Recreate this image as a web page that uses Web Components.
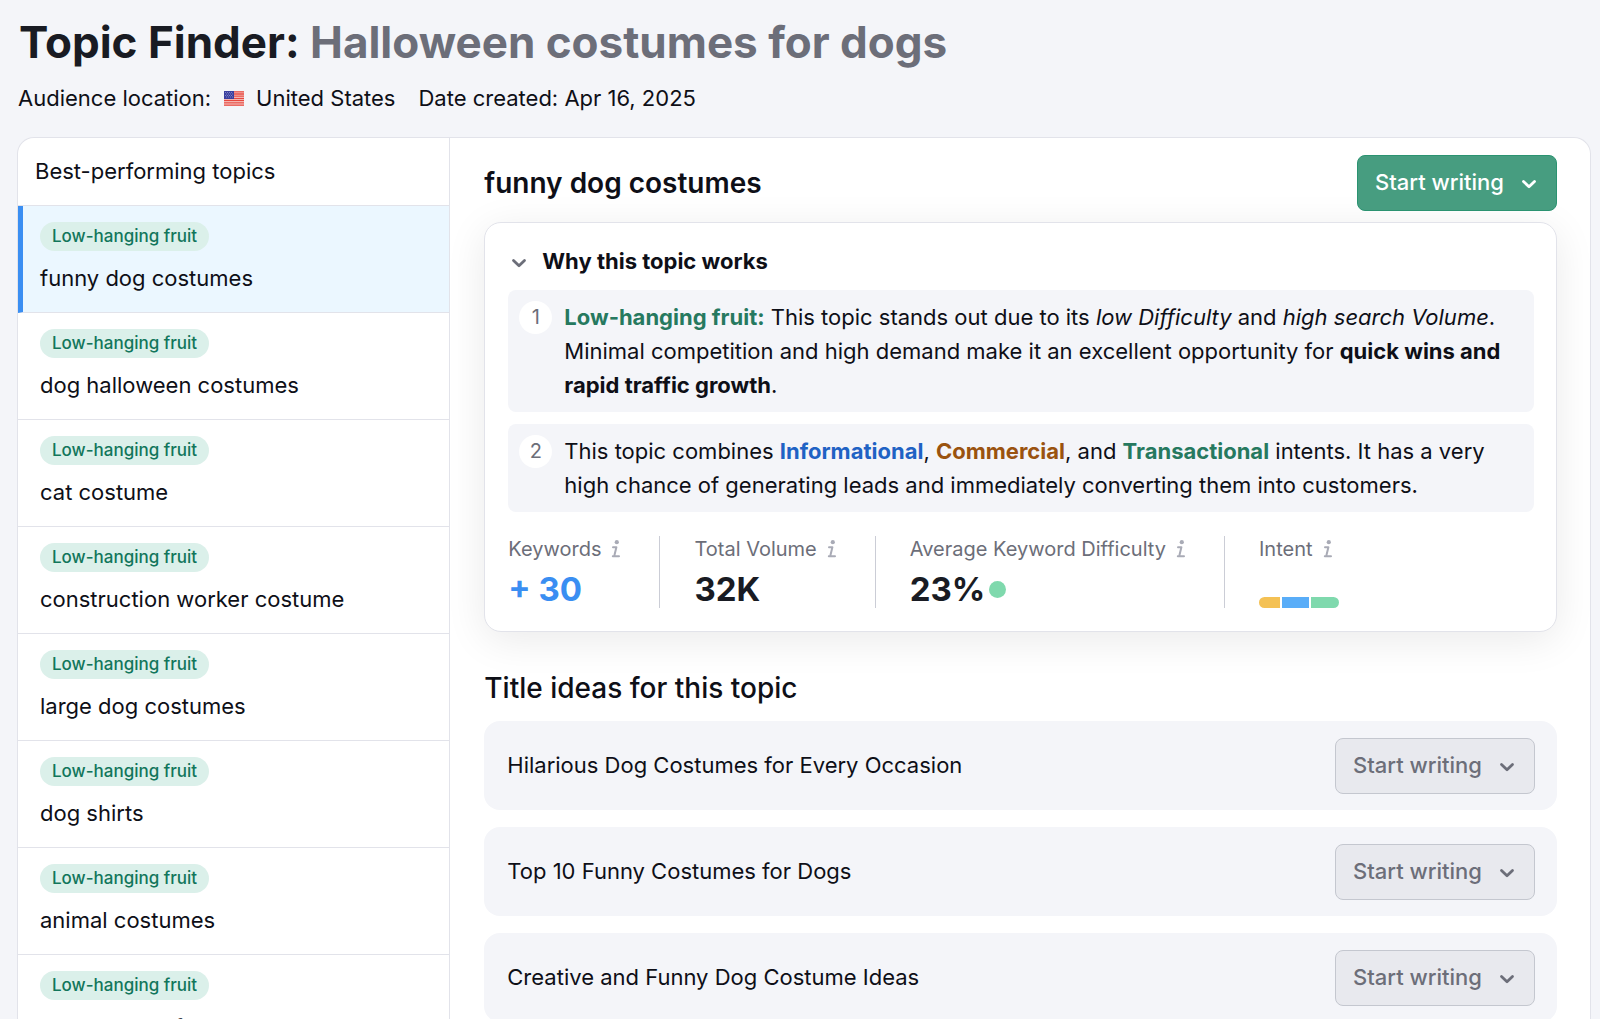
<!DOCTYPE html>
<html lang="en">
<head>
<meta charset="utf-8">
<meta name="viewport" content="width=device-width, initial-scale=1">
<title>Topic Finder</title>
<style>
  html, body { margin: 0; height: 100%; }
  body {
    --ink: #191b23;
    --muted: #6c6e79;
    --page: #f4f5f9;
    --line: #e2e3ea;
    font: 22px/34px Inter, "Liberation Sans", sans-serif;
    color: #0e0f17;
    background: var(--page);
    overflow: hidden;
  }
</style>
</head>
<body>
<topic-finder></topic-finder>

<script>
const define = (name, html, init) => {
  const template = document.createElement('template');
  template.innerHTML = '<style>*{box-sizing:border-box}</style>' + html;
  customElements.define(name, class extends HTMLElement {
    connectedCallback() {
      if (this.shadowRoot) return;
      this.attachShadow({ mode: 'open' }).append(template.content.cloneNode(true));
      if (init) init(this, this.shadowRoot);
    }
  });
};

define('chevron-icon', `
  <style>:host{display:block;width:22px;height:22px} svg{display:block}</style>
  <svg width="22" height="22" viewBox="0 0 22 22" fill="none" stroke="currentColor" stroke-width="2.800" stroke-linecap="round" stroke-linejoin="round" aria-hidden="true"><path d="M5.500 9.500 11 14.800l5.500-5.300"/></svg>`);

define('info-icon', `
  <style>:host{display:block;width:10px;height:18px;color:#a9abb6} svg{display:block}</style>
  <svg width="10" height="18" viewBox="0 0 10 18" fill="none" stroke="currentColor" stroke-width="2" stroke-linecap="round" stroke-linejoin="round" aria-hidden="true"><circle cx="5.800" cy="2.200" r="2.100" fill="currentColor" stroke="none"/><path d="M2 7.200h3.400L3.600 14.500q-.4 1.700 1.200 1.700H8M1.800 16.200h2"/></svg>`);

define('us-flag', `
  <style>:host{display:block;width:20px;height:15px} svg{display:block}</style>
  <svg width="20" height="15" viewBox="0 0 20 15" role="img" aria-label="US flag">
    <rect width="20" height="15" fill="#f7d9d6"/>
    <path d="M0 .8h20M0 3h20M0 5.200h20M0 7.500h20M0 9.700h20M0 11.900h20M0 14.200h20" stroke="#e8473f" stroke-width="1.300"/>
    <rect width="10" height="8" fill="#3a3f9f"/>
    <path d="M1 1.500h8M2 3h8M1 4.500h8M2 6h8" stroke="#8d90cc" stroke-width=".8" stroke-dasharray="1 1"/>
  </svg>`);

define('write-button', `
  <style>
    :host{display:block;flex:none}
    button{display:flex;align-items:center;gap:14px;height:56px;padding:0 16px 2px 17px;border:1px solid #c4c7cf;border-radius:8px;background:#e8e9ee;color:var(--muted);font:500 22px/34px Inter,"Liberation Sans",sans-serif;cursor:pointer}
    :host([primary]) button{background:#479d80;border-color:#2b9371;color:#fff}
    chevron-icon{margin-top:2px}
  </style>
  <button type="button"><span>Start writing</span><chevron-icon></chevron-icon></button>`);

define('topic-item', `
  <style>
    :host{display:block}
    a{display:block;height:107px;padding:16px 17px 0 22px;border-bottom:1px solid var(--line);color:inherit;text-decoration:none}
    :host([selected]) a{background:#ebf7ff;border-left:5px solid #3a8ef2;padding-left:17px}
    .badge{display:block;width:fit-content;padding:0 12px;border-radius:15px;background:#dbf0ea;color:#12765b;font-size:17px;font-weight:500;line-height:29px}
    .name{display:block;margin-top:10px}
  </style>
  <a href="#"><span class="badge">Low-hanging fruit</span><span class="name"><slot></slot></span></a>`);

define('insight-note', `
  <style>
    :host{display:flex;align-items:flex-start;gap:12px;padding:11px 12px 11px 11px;border-radius:8px;background:var(--page)}
    .num{flex:none;width:33px;height:33px;border-radius:50%;background:#fff;color:var(--muted);font-size:20px;line-height:33px;text-align:center}
    .text{line-height:34px;margin:-1px 0}
  </style>
  <span class="num"></span><div class="text"><slot></slot></div>`,
  (host, root) => { root.querySelector('.num').textContent = host.getAttribute('number'); });

define('stat-block', `
  <style>
    :host{display:flex;flex-direction:column;justify-content:space-between;height:72px;padding:0 38px 0 34px;border-left:1px solid #cbcdd6}
    :host([first]){padding-left:0;border-left:0}
    :host([last]) .value{align-items:flex-end}
    .label{display:flex;align-items:center;gap:10px;color:var(--muted);font-size:20px;line-height:26px}
    .value{display:flex;align-items:center;gap:4px;height:38px;font-size:33px;font-weight:700;line-height:38px;color:var(--ink)}
  </style>
  <div class="label"><span></span><info-icon></info-icon></div><div class="value"><slot></slot></div>`,
  (host, root) => { root.querySelector('.label span').textContent = host.getAttribute('label'); });

define('intent-bar', `
  <style>
    :host{display:flex;gap:2px;width:80px;height:11px;border-radius:6px;overflow:hidden}
    i:nth-of-type(1){flex:21;background:#f4c154} i:nth-of-type(2){flex:27;background:#59adf8} i:nth-of-type(3){flex:28;background:#7fd9ad}
  </style><i></i><i></i><i></i>`);

define('title-idea', `
  <style>
    :host{display:flex;align-items:center;justify-content:space-between;height:89px;padding:0 22px 0 23px;border-radius:16px;background:var(--page)}
    .title{padding-bottom:2px}
  </style>
  <span class="title"><slot></slot></span><write-button></write-button>`);

define('why-panel', `
  <style>
    :host{display:flex;flex-direction:column;gap:12px;padding:21px 22px 23px 23px;border:1px solid var(--line);border-radius:17px;background:#fff;box-shadow:0 8px 40px rgba(0,0,0,.085)}
    h3{display:flex;margin:0;font-size:22px;line-height:34px}
    h3 button{display:flex;align-items:center;gap:12px;padding:0;border:0;background:none;color:inherit;font:700 22px/34px Inter,"Liberation Sans",sans-serif}
    chevron-icon{color:var(--muted);margin-top:2px}
    .stats{display:flex;margin-top:12px}
    em{font-style:italic} b{font-weight:700}
    .green{color:#26795f} .blue{color:#1f62c4} .brown{color:#9a5310}
    .plus{color:#3a8ef2}
    .dot{width:17px;height:17px;border-radius:50%;background:#7fd9ad}
  </style>
  <h3><button type="button" aria-expanded="true"><chevron-icon></chevron-icon><span>Why this topic works</span></button></h3>
  <insight-note number="1"><b class="green">Low-hanging fruit:</b> This topic stands out due to its <em>low Difficulty</em> and <em>high search Volume</em>. Minimal competition and high demand make it an excellent opportunity for <b>quick wins and rapid traffic growth</b>.</insight-note>
  <insight-note number="2">This topic combines <b class="blue">Informational</b>, <b class="brown">Commercial</b>, and <b class="green">Transactional</b> intents. It has a very high chance of generating leads and immediately converting them into customers.</insight-note>
  <div class="stats">
    <stat-block first label="Keywords"><span class="plus">+ 30</span></stat-block>
    <stat-block label="Total Volume">32K</stat-block>
    <stat-block label="Average Keyword Difficulty">23%<span class="dot"></span></stat-block>
    <stat-block last label="Intent"><intent-bar></intent-bar></stat-block>
  </div>`);

define('topic-finder', `
  <style>
    :host{display:flex;flex-direction:column;height:100vh;padding:17px 9px 0 17px}
    h1{margin:0;padding-left:2px;font-size:44px;font-weight:700;line-height:50px;color:var(--ink)}
    h1 span{color:var(--muted)}
    .meta{display:flex;align-items:center;margin-top:14px;padding-left:1px}
    .meta us-flag{margin:0 12px 0 13px}
    .meta .date{margin-left:23px}
    .card{display:flex;flex:1;min-height:0;margin-top:22px;border:1px solid var(--line);border-bottom:0;border-radius:17px 17px 0 0;background:#fff;overflow:hidden}
    nav{flex:none;width:27.500%;border-right:1px solid var(--line)}
    nav h2{margin:0;padding:16px 17px 17px;border-bottom:1px solid var(--line);font-size:22px;font-weight:400;line-height:34px}
    main{flex:1;min-width:0;padding:17px 33px 0 34px}
    .head{display:flex;align-items:center;justify-content:space-between;margin-bottom:11px}
    .head h2{margin:0;font-size:28px;font-weight:600;line-height:38px}
    .ideas{margin:37px 0 14px;font-size:28px;font-weight:500;line-height:38px}
    .list{display:flex;flex-direction:column;gap:17px}
  </style>
  <header>
    <h1>Topic Finder: <span>Halloween costumes for dogs</span></h1>
    <div class="meta"><span>Audience location:</span><us-flag></us-flag><span>United States</span><span class="date">Date created: Apr 16, 2025</span></div>
  </header>
  <div class="card">
    <nav>
      <h2>Best-performing topics</h2>
      <topic-item selected>funny dog costumes</topic-item>
      <topic-item>dog halloween costumes</topic-item>
      <topic-item>cat costume</topic-item>
      <topic-item>construction worker costume</topic-item>
      <topic-item>large dog costumes</topic-item>
      <topic-item>dog shirts</topic-item>
      <topic-item>animal costumes</topic-item>
      <topic-item>cat costume for</topic-item>
    </nav>
    <main>
      <div class="head"><h2>funny dog costumes</h2><write-button primary></write-button></div>
      <why-panel></why-panel>
      <h2 class="ideas">Title ideas for this topic</h2>
      <div class="list">
        <title-idea>Hilarious Dog Costumes for Every Occasion</title-idea>
        <title-idea>Top 10 Funny Costumes for Dogs</title-idea>
        <title-idea>Creative and Funny Dog Costume Ideas</title-idea>
      </div>
    </main>
  </div>`);
</script>
</body>
</html>
